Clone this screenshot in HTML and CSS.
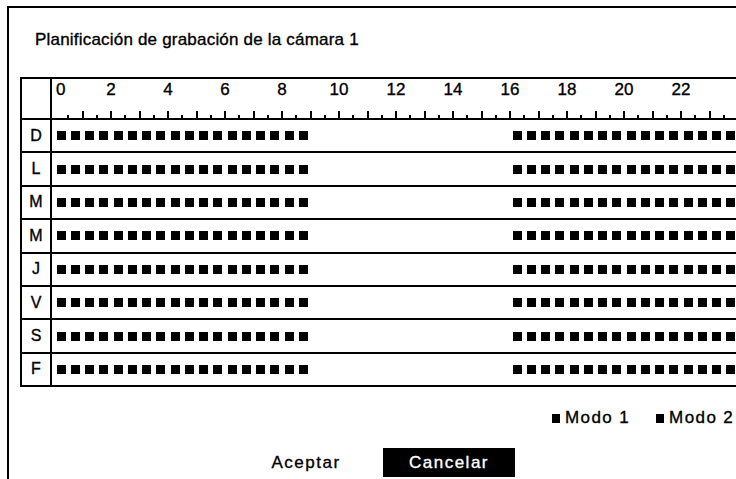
FILE: index.html
```html
<!DOCTYPE html>
<html>
<head lang="es">
    <meta charset="UTF-8">
    <title>Planificación de grabación</title>
    <link rel="stylesheet" href="styles.css">
    <script>
        window.onload = function(){
            var days = ["D","L","M","M","J","V","S","F"];
            var oRows = document.getElementById("rows");
            var oTicks = document.getElementById("ticks");
            var i, j;

            //刻度: 每半小时一格
            for(i = 0; i < 48; i++){
                var t = document.createElement("span");
                if(i == 0){
                    t.className = "tick none";
                }else if(i % 2 == 0){
                    t.className = "tick big";
                }else{
                    t.className = "tick";
                }
                oTicks.appendChild(t);
            }

            //每天一行, 0:00-9:00 和 16:00-24:00 录像
            for(i = 0; i < days.length; i++){
                var row = document.createElement("div");
                row.className = "row";
                var d = document.createElement("div");
                d.className = "day";
                d.innerHTML = days[i];
                row.appendChild(d);
                var track = document.createElement("div");
                track.className = "track";
                for(j = 0; j < 48; j++){
                    var s = document.createElement("span");
                    s.className = "slot";
                    if(j < 18 || j >= 32){
                        s.className = "slot on";
                    }
                    track.appendChild(s);
                }
                row.appendChild(track);
                oRows.appendChild(row);
            }
        }
    </script>
</head>
<body>
    <div class="win">
        <h1 class="title">Planificación de grabación de la cámara 1</h1>
        <div class="sched">
            <div class="head">
                <div class="day"></div>
                <div class="ruler">
                    <div class="nums">
                        <span class="first">0</span>
                        <span>2</span>
                        <span>4</span>
                        <span>6</span>
                        <span>8</span>
                        <span>10</span>
                        <span>12</span>
                        <span>14</span>
                        <span>16</span>
                        <span>18</span>
                        <span>20</span>
                        <span>22</span>
                    </div>
                    <div class="ticks" id="ticks"></div>
                </div>
            </div>
            <div id="rows"></div>
        </div>
        <div class="legend">
            <span class="key"><i></i>Modo 1</span>
            <span class="key"><i></i>Modo 2</span>
        </div>
        <div class="btns">
            <a class="btn">Aceptar</a>
            <a class="btn on">Cancelar</a>
        </div>
    </div>
</body>
</html>
```

FILE: styles.css
```css
 *{
     margin: 0;
     padding: 0;
 }
 html, body{
     width: 736px;
     height: 479px;
     overflow: hidden;
     background: #fff;
 }
 body{
     font-family: "Liberation Sans", Arial, sans-serif;
     color: #000;
     -webkit-text-stroke: 0.35px #000;
 }
 .win{
     margin: 6px 0 0 7px;
     width: 729px;
     height: 473px;
     overflow: hidden;
     box-sizing: border-box;
     border-left: 2px solid #000;
     border-top: 2px solid #000;
 }
 .title{
     font-size: 17px;
     font-weight: normal;
     line-height: 20px;
     letter-spacing: 0.2px;
     margin-top: 22px;
     padding-left: 26px;
 }
 .sched{
     margin: 27px 0 0 11px;
     width: 760px;
     border-left: 2px solid #000;
     border-top: 2px solid #000;
 }
 .head{
     display: flex;
     height: 39px;
     border-bottom: 2px solid #000;
 }
 .day{
     width: 28px;
     flex: none;
     border-right: 2px solid #000;
     display: flex;
     align-items: center;
     justify-content: center;
     font-size: 16px;
 }
 .ruler{
     display: flex;
     flex-direction: column;
     justify-content: space-between;
     padding-left: 2px;
 }
 .nums{
     display: flex;
     font-size: 17px;
     line-height: 18px;
     padding-top: 2px;
 }
 .nums span{
     width: 57px;
     flex: none;
     text-align: center;
 }
 .nums .first{
     width: 28.5px;
     text-align: left;
     padding-left: 2px;
     box-sizing: border-box;
 }
 .ticks{
     display: flex;
     align-items: flex-end;
     height: 7px;
 }
 .tick{
     width: 14.25px;
     height: 3px;
     flex: none;
     box-sizing: border-box;
     border-left: 2px solid #000;
     margin-left: -1px;
     margin-right: 1px;
 }
 .tick.big{
     height: 7px;
 }
 .tick.none{
     border-left: 0;
 }
 .row{
     display: flex;
     height: 31.4px;
     border-bottom: 2px solid #000;
 }
 .track{
     display: flex;
     align-items: center;
     padding-left: 2px;
 }
 .slot{
     width: 14.25px;
     height: 9px;
     flex: none;
     display: flex;
     justify-content: center;
 }
 .slot.on::before{
     content: "";
     width: 9px;
     height: 9px;
     background: #000;
 }
 .legend{
     display: flex;
     gap: 26px;
     margin-top: 21px;
     padding-left: 543px;
     font-size: 17px;
     line-height: 20px;
     letter-spacing: 1.4px;
 }
 .key{
     display: flex;
     align-items: center;
     white-space: nowrap;
 }
 .key i{
     width: 8px;
     height: 9px;
     margin-right: 5px;
     background: #000;
 }
 .btns{
     display: flex;
     gap: 11px;
     margin-top: 20px;
     padding-left: 231px;
 }
 .btn{
     width: 132px;
     height: 29px;
     line-height: 29px;
     text-align: center;
     font-size: 17px;
     letter-spacing: 1.5px;
 }
 .btn.on{
     background: #000;
     color: #fff;
     -webkit-text-stroke: 0.35px #fff;
 }
```
